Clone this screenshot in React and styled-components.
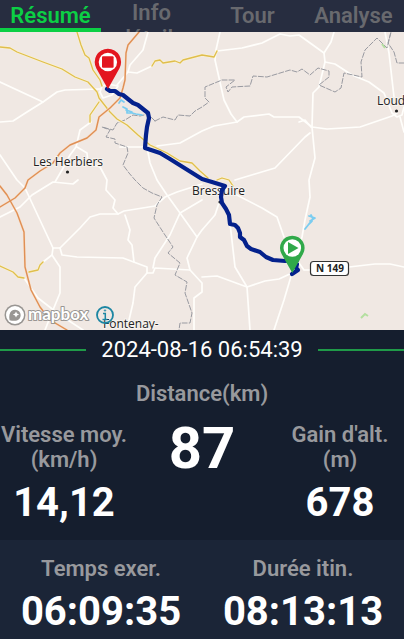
import React, { useState } from 'react';
import styled, { createGlobalStyle } from 'styled-components';

const GlobalStyle = createGlobalStyle`
  * {
    box-sizing: border-box;
  }

  body {
    margin: 0;
    background-color: #1b2537;
    font-family: Roboto, 'Liberation Sans', sans-serif;
  }
`;

const Page = styled.div`
  min-height: 100vh;
  background-color: #1b2537;
`;

const TabBar = styled.nav`
  display: grid;
  grid-template-columns: repeat(4, 1fr);
  height: 32px;
  background-color: #272d40;
  overflow: hidden;
`;

const Tab = styled.button`
  height: 32px;
  padding: ${(props) => (props.$wrap ? '0 16px' : '3px 0 0')};
  border: none;
  border-bottom: ${(props) => (props.$active ? '4px solid #0ccf45' : 'none')};
  border-radius: 4px 4px 0 0;
  background: none;
  color: ${(props) => (props.$active ? '#0ccf45' : '#68696e')};
  font-family: inherit;
  font-size: 22px;
  font-weight: 600;
  line-height: 26px;
  display: flex;
  align-items: flex-start;
  justify-content: center;
  text-align: center;
  overflow: hidden;
  cursor: pointer;
`;

const MapArea = styled.section`
  position: relative;
  background-color: #f0e8e3;
  overflow: hidden;
`;

const MapSvg = styled.svg`
  display: block;
  width: 100%;
  height: auto;
`;

const Place = styled.text`
  font-family: 'Open Sans', sans-serif;
  font-size: 12px;
  fill: #222;
  stroke: #f7f3ef;
  stroke-width: 2px;
  paint-order: stroke;
`;

const RoadNumber = styled.text`
  font-family: 'Open Sans', sans-serif;
  font-size: 10px;
  font-weight: 700;
  fill: #222;
  text-anchor: middle;
`;

const Attribution = styled.div`
  position: absolute;
  left: 4px;
  bottom: 4px;
  display: flex;
  align-items: center;
  gap: 1px;
`;

const LogoLink = styled.a`
  display: block;
  height: 22px;
`;

const LogoText = styled.text`
  font-family: Lato, sans-serif;
  font-size: 17px;
  font-weight: 700;
  fill: #fff;
  stroke: #999693;
  stroke-width: 2px;
  stroke-linejoin: round;
  paint-order: stroke;
`;

const InfoButton = styled.button`
  width: 20px;
  height: 20px;
  padding: 0;
  border: none;
  background: none;
  cursor: pointer;
`;

const Summary = styled.section`
  height: 210px;
  padding-top: 7px;
  background-color: #151e2e;
`;

const DateRow = styled.div`
  display: flex;
  align-items: center;
  gap: 15px;
  color: #fff;
  font-size: 22px;
  line-height: 26px;

  &::before,
  &::after {
    content: '';
    flex: 1;
    height: 2px;
    background-color: #1f9a48;
  }
`;

const Label = styled.div`
  color: #98999d;
  font-size: 22px;
  font-weight: 600;
  line-height: 25px;
  text-align: center;
`;

const DistanceLabel = styled(Label)`
  padding-top: 18px;
`;

const Value = styled.div`
  color: #fff;
  font-size: ${(props) => (props.$large ? '58px' : '40px')};
  font-weight: 700;
  line-height: ${(props) => (props.$large ? '52px' : '62px')};
  text-align: center;
`;

const StatGrid = styled.div`
  display: grid;
  grid-template-columns: repeat(3, 1fr);
  gap: 10px;
  padding-top: 16px;
`;

const Times = styled.section`
  display: grid;
  grid-template-columns: repeat(2, 1fr);
  padding-top: 16px;
  height: 99px;
  background-color: #1b2537;
  overflow: hidden;
`;

const TABS = ['Résumé', 'Info détails', 'Tour', 'Analyse'];

const WHITE_ROADS = [
  '0,82 43,102 57,92 65,90 100,89',
  '0,122 13,121 27,112 43,102',
  '148,32 143,50 130,65 128,72 117,85',
  '128,72 137,73 152,66',
  '102,86 100,92 103,98 112,95 118,86 108,84 102,86',
  '91,122 80,130 76,147 70,155 62,170 55,182',
  '77,147 87,153 88,163 100,167 107,180 106,190 115,200 113,208 118,214 124,211 155,206 165,197 177,192 202,184',
  '0,155 17,180 25,188 53,248',
  '120,147 147,147 150,163 157,180 167,195 180,213 170,235 155,258 153,268',
  '157,146 180,143 202,131 214,126 237,122 244,117 269,114 274,117 299,117 312,127 327,129 360,127 392,116 397,113',
  '220,32 216,50 215,60 224,100 231,114 237,122',
  '217,51 242,48 262,43 280,34 290,36 299,35 324,53 325,62',
  '334,32 331,42 324,53',
  '325,62 319,87 313,93 312,127 315,158 309,180 310,197 305,220 302,237 292,273 284,300 274,330',
  '325,62 335,64 352,75 369,82 384,93 392,113 397,117 402,115 404,107',
  '385,32 389,53 394,97',
  '400,117 404,132',
  '311,127 305,120 299,122',
  '310,133 305,137 275,168 255,174 235,180',
  '0,217 20,207 32,195 53,182 73,184 78,180',
  '118,214 100,214 90,217 80,228 60,248 53,248 52,255 60,267 60,293 53,310 45,330',
  '43,262 52,255',
  '60,248 62,255 77,257 123,258 147,267 147,273 153,273 155,268 190,270 202,283 202,292 194,298 194,330',
  '125,215 130,230 128,240 132,245 134,262',
  '147,273 135,287 133,303 129,320',
  '180,213 197,237 187,258 190,270',
  '180,213 202,200',
  '197,237 202,230 215,215 220,200',
  '24,278 38,298 60,315 83,330',
  '227,190 262,208 277,217 284,237',
  '202,277 217,276 247,287 265,281 279,279 292,273',
  '230,223 235,267 247,287 250,330',
  '299,263 304,270 310,270',
  '349,267 375,264 390,264 404,267',
];

const YELLOW_ROADS = [
  '0,47 10,48 17,52 43,62 62,69 75,77 88,82 97,92 99,98 110,112 117,119 127,125 138,135 150,145 167,153 180,161 192,163 200,171 208,178',
  '217,180 222,178 229,180 233,186',
  '77,32 81,45 85,55 89,58 93,70 100,80 102,86',
  '152,66 155,61 160,60 163,63 175,61 180,63 183,60 202,55 214,57 217,51',
  '99,102 90,115 90,122',
  '0,266 13,272 18,277 24,278',
  '29,272 38,270 40,265 43,262',
];

const ORANGE_ROADS = [
  '139,32 128,45 126,53 125,80 123,88 120,98 110,108 99,117 96,130 87,138 70,145 60,153 53,163 40,171 28,180 25,188 15,198 0,207',
  '0,186 7,195 17,213 24,232 25,267 31,290 40,307 50,320 67,330',
];

const BORDERS = [
  '155,121 163,117 175,120 178,115 190,116 195,111 202,107 209,102 205,98 205,87 222,80 235,80 226,87 228,92 232,87 250,86 253,76 267,77 290,70 297,72 302,69 310,75 318,68 329,71 329,77 319,85 335,92 341,88 344,73 362,77 361,62 365,50 377,38 387,48 391,32 388,43 394,52 397,63 404,63',
  '155,121 148,114 140,116 133,115 125,120 117,123 113,130 102,127 110,130 106,137 115,139 115,143 127,147 128,153 123,165 129,173 135,180 143,188 152,193 162,197 157,205 154,218 163,232 173,247 168,253 180,263 175,275 187,282 185,293 192,313 190,323 180,323 179,330',
];

const ROUTE =
  '107,89 110,91 115,91 119,94 123,95 128,99 133,103 138,105 143,109 148,113 149,118 147,127 146,135 145,148 151,150 160,153 170,159 202,179 212,182 225,186 222,190 221,197 222,203 226,209 229,215 230,224 235,225 238,228 240,233 240,237 244,240 247,246 251,249 260,252 266,257 273,260 285,261 297,260';

const ROUTE_START = '297,264 296,268 298,270 292,274';

const Lines = ({ list, ...rest }) => (
  <g fill="none" strokeLinejoin="round" strokeLinecap="round" {...rest}>
    {list.map((points) => (
      <polyline key={points} points={points} />
    ))}
  </g>
);

const RouteMap = () => (
  <MapSvg viewBox="0 32 404 298" role="img" aria-label="Carte du parcours">
    <rect y="32" width="404" height="298" fill="#f0e8e3" />
    <Lines list={WHITE_ROADS} stroke="#fffefb" strokeWidth="1.7" />
    <Lines list={BORDERS} stroke="#999aa1" strokeWidth="1" strokeDasharray="5 2" />
    <Lines list={YELLOW_ROADS} stroke="#fbf3cf" strokeWidth="2.4" />
    <Lines list={YELLOW_ROADS} stroke="#dfbd4e" strokeWidth="1.3" />
    <Lines list={ORANGE_ROADS} stroke="#f8e0cb" strokeWidth="2.4" />
    <Lines list={ORANGE_ROADS} stroke="#df8f55" strokeWidth="1.4" />
    <g fill="none" stroke="#7accf0" strokeLinejoin="round" strokeLinecap="round">
      <path d="M119 103l2-3 3 2M123 107l4 2 0 4 5 0 4 1 6 1M126 110l6 2" strokeWidth="1.7" />
      <path d="M305 229l4-5 3-3M309 216l6 2-5 3M311 215l2 4" strokeWidth="1.8" />
    </g>
    <path d="M361 318l4-4 3 2" fill="none" stroke="#b4dfa0" strokeWidth="2" />
    <path d="M382 44l3 4" fill="none" stroke="#b4dfa0" strokeWidth="2" />
    <Place x="33" y="166">Les Herbiers</Place>
    <Place x="377" y="105">Loud</Place>
    <Place x="192" y="195">Bressuire</Place>
    <Place x="103" y="328">Fontenay-</Place>
    <g fill="#222">
      <circle cx="67.500" cy="172" r="1.600" />
      <circle cx="396.500" cy="111" r="1.600" />
      <circle cx="220" cy="202" r="1.600" />
    </g>
    <rect x="310.500" y="261.500" width="38" height="14" rx="3" fill="#fff" stroke="#333" strokeWidth="1.200" />
    <RoadNumber x="330" y="272">N 149</RoadNumber>
    <Lines list={[ROUTE, ROUTE_START]} stroke="#04218c" strokeWidth="4.2" />
    <path d="M292.300 273L281.600 254.100a12.300 12.300 0 1 1 21.400 0z" fill="#30a94a" />
    <circle cx="292.300" cy="248" r="8.800" fill="#fff" />
    <path d="M288 242v12l10.500-6z" fill="#30a94a" />
    <path d="M107.900 89L96.400 68.500a13.200 13.200 0 1 1 23 0z" fill="#e31620" />
    <circle cx="107.900" cy="62" r="9.200" fill="#fff" />
    <rect x="102" y="56.300" width="11.600" height="11.400" rx="1" fill="#e31620" />
  </MapSvg>
);

const MapboxLogo = () => (
  <svg width="90" height="22" viewBox="0 0 90 22">
    <circle cx="11" cy="11" r="10.500" fill="#999693" />
    <circle cx="11" cy="11" r="9" fill="#fff" />
    <path d="M5.600 16.200c-.9-4.200 0-7.400 1.800-9.200a5.600 5.600 0 0 1 7.900 7.900c-1.900 1.900-5.300 2.300-9.700 1.300z" fill="#999693" />
    <path d="M12 7.400l1 2.100 2.100 1-2.100 1-1 2.100-1-2.100-2.100-1 2.100-1z" fill="#fff" />
    <LogoText x="24" y="16">mapbox</LogoText>
  </svg>
);

const Stat = ({ label, value }) => (
  <div>
    <Label>{label}</Label>
    <Value>{value}</Value>
  </div>
);

const App = () => {
  const [active, setActive] = useState('Résumé');

  return (
    <Page>
      <GlobalStyle />
      <TabBar>
        {TABS.map((tab) => (
          <Tab
            key={tab}
            $active={tab === active}
            $wrap={tab.includes(' ')}
            onClick={() => setActive(tab)}
          >
            {tab}
          </Tab>
        ))}
      </TabBar>
      <MapArea>
        <RouteMap />
        <Attribution>
          <LogoLink href="#mapbox" aria-label="Mapbox">
            <MapboxLogo />
          </LogoLink>
          <InfoButton aria-label="Informations sur la carte">
            <svg width="20" height="20" viewBox="0 0 20 20" fill="none" stroke="#1c86a3">
              <circle cx="10" cy="10" r="8" strokeWidth="1.800" />
              <path d="M8 8.500h2.300v6M7.500 14.500h5" strokeWidth="1.500" />
              <circle cx="10" cy="5.500" r="0.700" strokeWidth="1" />
            </svg>
          </InfoButton>
        </Attribution>
      </MapArea>
      <Summary>
        <DateRow>2024-08-16 06:54:39</DateRow>
        <DistanceLabel>Distance(km)</DistanceLabel>
        <StatGrid>
          <Stat label="Vitesse moy. (km/h)" value="14,12" />
          <Value $large>87</Value>
          <Stat label={<>Gain d'alt.<br />(m)</>} value="678" />
        </StatGrid>
      </Summary>
      <Times>
        <Stat label="Temps exer." value="06:09:35" />
        <Stat label="Durée itin." value="08:13:13" />
      </Times>
    </Page>
  );
};

export default App;
